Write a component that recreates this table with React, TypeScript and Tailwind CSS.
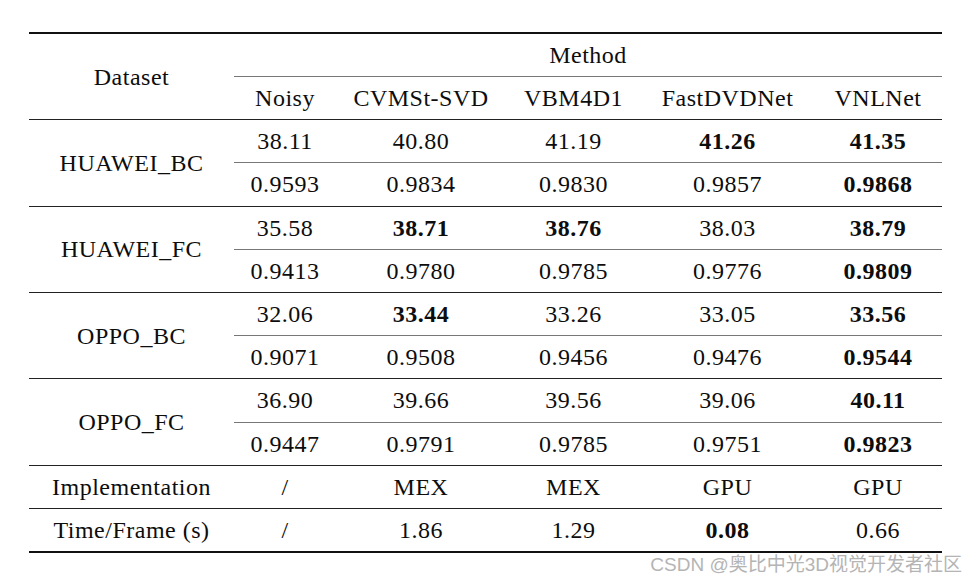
import React from "react";

type Cell = { v: string; b?: boolean };

const cols = [
  { name: "Noisy", w: "w-[102px]" },
  { name: "CVMSt-SVD", w: "w-[170px]" },
  { name: "VBM4D1", w: "w-[135px]" },
  { name: "FastDVDNet", w: "w-[173px]" },
  { name: "VNLNet", w: "w-[128px]" },
];

const c = (v: string, b = false): Cell => ({ v, b });

const groups: { name: string; psnr: Cell[]; ssim: Cell[] }[] = [
  {
    name: "HUAWEI_BC",
    psnr: [c("38.11"), c("40.80"), c("41.19"), c("41.26", true), c("41.35", true)],
    ssim: [c("0.9593"), c("0.9834"), c("0.9830"), c("0.9857"), c("0.9868", true)],
  },
  {
    name: "HUAWEI_FC",
    psnr: [c("35.58"), c("38.71", true), c("38.76", true), c("38.03"), c("38.79", true)],
    ssim: [c("0.9413"), c("0.9780"), c("0.9785"), c("0.9776"), c("0.9809", true)],
  },
  {
    name: "OPPO_BC",
    psnr: [c("32.06"), c("33.44", true), c("33.26"), c("33.05"), c("33.56", true)],
    ssim: [c("0.9071"), c("0.9508"), c("0.9456"), c("0.9476"), c("0.9544", true)],
  },
  {
    name: "OPPO_FC",
    psnr: [c("36.90"), c("39.66"), c("39.56"), c("39.06"), c("40.11", true)],
    ssim: [c("0.9447"), c("0.9791"), c("0.9785"), c("0.9751"), c("0.9823", true)],
  },
];

const extra: { name: string; cells: Cell[] }[] = [
  { name: "Implementation", cells: [c("/"), c("MEX"), c("MEX"), c("GPU"), c("GPU")] },
  { name: "Time/Frame (s)", cells: [c("/"), c("1.86"), c("1.29"), c("0.08", true), c("0.66")] },
];

function Cells({ cells }: { cells: Cell[] }) {
  return (
    <div className="flex h-[42.2px]">
      {cells.map((cell, i) => (
        <div
          key={i}
          className={`${cols[i].w} flex items-center justify-center ${cell.b ? "font-bold" : ""}`}
        >
          {cell.v}
        </div>
      ))}
    </div>
  );
}

export default function App() {
  return (
    <div className="relative w-[978px] h-[585px] bg-white overflow-hidden">
      <div
        className="ml-[29px] pt-[32px] w-[913px] text-[24px] text-[#0d0d0d] tracking-[0.5px]"
        style={{ fontFamily: '"Liberation Serif", "Times New Roman", serif' }}
      >
        <div className="border-t-2 border-b-2 border-[#111]">
          {/* header */}
          <div className="flex border-b border-[#222]">
            <div className="w-[205px] flex items-center justify-center">Dataset</div>
            <div className="flex-1">
              <div className="h-[42px] flex items-center justify-center">Method</div>
              <div className="border-t border-[#777]">
                <Cells cells={cols.map((col) => c(col.name))} />
              </div>
            </div>
          </div>

          {groups.map((g) => (
            <div key={g.name} className="flex border-b border-[#222]">
              <div className="w-[205px] flex items-center justify-center">{g.name}</div>
              <div className="flex-1">
                <Cells cells={g.psnr} />
                <div className="border-t border-[#777]">
                  <Cells cells={g.ssim} />
                </div>
              </div>
            </div>
          ))}

          {extra.map((r, i) => (
            <div
              key={r.name}
              className={`flex ${i === 0 ? "border-b border-[#222]" : ""}`}
            >
              <div className="w-[205px] flex items-center justify-center">{r.name}</div>
              <div className="flex-1">
                <Cells cells={r.cells} />
              </div>
            </div>
          ))}
        </div>
      </div>

      <div
        className="absolute right-[16px] top-[555px] text-[19px] leading-none text-[#b4b4b4]"
        style={{ fontFamily: '"Liberation Sans", "Noto Sans CJK SC", sans-serif' }}
      >
        CSDN @奥比中光3D视觉开发者社区
      </div>
    </div>
  );
}
